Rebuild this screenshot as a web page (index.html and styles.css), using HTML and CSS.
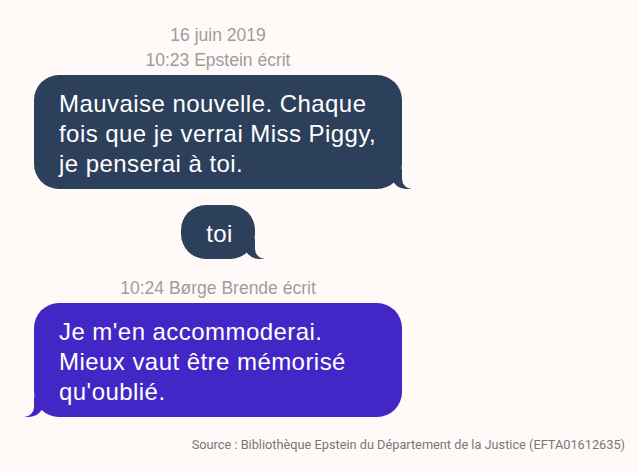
FILE: index.html
```html
<!DOCTYPE html>
<html lang="fr">
<head>
    <meta charset="UTF-8">
    <meta name="viewport" content="width=device-width, initial-scale=1.0">
    <title>Conversation</title>
    <link rel="stylesheet" href="styles.css">
</head>
<body>
    <div class="chat">
        <p class="day">16 juin 2019</p>
        <p class="meta">10:23 Epstein écrit</p>
        <div class="bubble dark tail-right">Mauvaise nouvelle. Chaque fois que je verrai Miss Piggy, je penserai à toi.</div>
        <div class="bubble dark tail-right">toi</div>
        <p class="meta">10:24 Børge Brende écrit</p>
        <div class="bubble purple tail-left">Je m'en accommoderai. Mieux vaut être mémorisé qu'oublié.</div>
    </div>
    <p class="source">Source : Bibliothèque Epstein du Département de la Justice (EFTA01612635)</p>
</body>
</html>
```

FILE: styles.css
```css
body {
    margin: 0;
    padding: 0;
    background-color: #fffaf7;
    font-family: "Liberation Sans", Arial, sans-serif;
}

.chat {
    width: 368px;
    margin-left: 34px;
    padding-top: 25px;
}

.day,
.meta {
    margin: 0 0 5px;
    text-align: center;
    font-size: 17.5px;
    line-height: 20px;
    color: #9d9d9d;
}

.bubble + .meta {
    margin-top: 19px;
}

.bubble {
    position: relative;
    box-sizing: border-box;
    width: fit-content;
    max-width: 368px;
    margin: 0 auto 16px;
    padding: 14px 22px 10px 25px;
    border-radius: 25px;
    font-size: 24px;
    line-height: 30px;
    letter-spacing: 0.45px;
    color: #fff;
}

.dark {
    background-color: #2c3f5b;
}

.purple {
    background-color: #4327c6;
}

.bubble::before,
.bubble::after {
    content: "";
    position: absolute;
    bottom: 0;
    height: 20px;
}

.tail-right::before {
    right: -9px;
    width: 20px;
    background-color: inherit;
    border-bottom-left-radius: 15px;
}

.tail-right::after {
    right: -11px;
    width: 11px;
    background-color: #fffaf7;
    border-bottom-left-radius: 10px;
}

.tail-left::before {
    left: -10px;
    width: 20px;
    background-color: inherit;
    border-bottom-right-radius: 15px;
}

.tail-left::after {
    left: -12px;
    width: 12px;
    background-color: #fffaf7;
    border-bottom-right-radius: 10px;
}

.source {
    margin: 20px 13px 0 0;
    text-align: right;
    font-family: Roboto, "Liberation Sans", sans-serif;
    font-size: 12.75px;
    color: #777;
}
```
